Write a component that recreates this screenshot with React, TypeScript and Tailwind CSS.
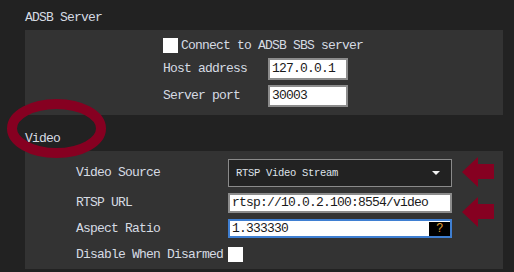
const mono = { fontFamily: '"Liberation Mono", "DejaVu Sans Mono", monospace' };

const Check = () => <div className="h-[15px] w-[15px] shrink-0 bg-white" />;

const TextBox = ({ value, w = 'w-[80px]', h = 'h-[22px]' }: { value: string; w?: string; h?: string }) => (
  <div
    className={`${w} ${h} flex items-center border-2 border-[#8c8c8c] bg-white pl-[2px] text-[13px] tracking-[-0.8px] text-[#1a1a1a]`}
  >
    {value}
  </div>
);

const Arrow = () => (
  <svg width="32" height="30" viewBox="0 0 32 30">
    <polygon points="0,15 16,0 16,7 32,7 32,22 16,22 16,30" fill="#860021" />
  </svg>
);

export default function App() {
  return (
    <div className="relative h-[272px] w-[514px] overflow-hidden bg-[#222222] text-[#d6dbe3]" style={mono}>
      {/* ADSB */}
      <div className="h-[30px] pl-[25px] pt-[11px] text-[13px] leading-[14px] tracking-[-0.8px]">ADSB Server</div>
      <div className="ml-[25px] mr-[11px] flex h-[85px] flex-col gap-[5px] bg-[#333333] pl-[138px] pt-[8px] text-[13px] leading-[14px] tracking-[-0.8px]">
        <div className="flex h-[15px] items-center gap-[3px]">
          <Check />
          <span>Connect to ADSB SBS server</span>
        </div>
        <div className="flex items-center">
          <span className="w-[105px]">Host address</span>
          <TextBox value="127.0.0.1" />
        </div>
        <div className="flex items-center">
          <span className="w-[105px]">Server port</span>
          <TextBox value="30003" />
        </div>
      </div>

      {/* Video */}
      <div className="h-[36px] pl-[25px] pt-[17px] text-[13px] leading-[14px] tracking-[-0.8px]">Video</div>
      <div className="ml-[25px] mr-[11px] flex h-[118px] flex-col bg-[#333333] pl-[51px] pt-[8px] text-[13px] leading-[14px] tracking-[-0.8px]">
        <div className="flex items-center">
          <span className="w-[152px]">Video Source</span>
          <div className="flex h-[28px] w-[224px] items-center justify-between border border-[#8a8a8a] bg-[#222222] pl-[7px] pr-[11px] text-[10.5px] tracking-[-0.3px] text-[#dfe3ea]">
            <span>RTSP Video Stream</span>
            <svg width="8" height="4" viewBox="0 0 8 4">
              <polygon points="0,0 8,0 4,4" fill="#f2f2f2" />
            </svg>
          </div>
        </div>
        <div className="mt-[6px] flex items-center">
          <span className="w-[152px]">RTSP URL</span>
          <TextBox value="rtsp://10.0.2.100:8554/video" w="w-[224px]" h="h-[20px]" />
        </div>
        <div className="mt-[6px] flex items-center">
          <span className="w-[152px]">Aspect Ratio</span>
          <div className="flex h-[19px] w-[224px] items-center justify-between border-2 border-[#3f7fd2] bg-white pl-[2px] text-[13px] tracking-[-0.8px] text-[#1a1a1a]">
            <span>1.333330</span>
            <span className="flex h-[14px] w-[21px] items-center justify-center bg-black text-[12px] text-[#e0a23a]">?</span>
          </div>
        </div>
        <div className="mt-[9px] flex items-center">
          <span className="w-[152px]">Disable When Disarmed</span>
          <Check />
        </div>
      </div>

      {/* annotations */}
      <svg className="pointer-events-none absolute left-0 top-0" width="514" height="272">
        <ellipse cx="56.5" cy="128.5" rx="44.5" ry="24.5" fill="none" stroke="#860021" strokeWidth="10" />
      </svg>
      <div className="absolute left-[462px] top-[157px]">
        <Arrow />
      </div>
      <div className="absolute left-[462px] top-[197px]">
        <Arrow />
      </div>
    </div>
  );
}
